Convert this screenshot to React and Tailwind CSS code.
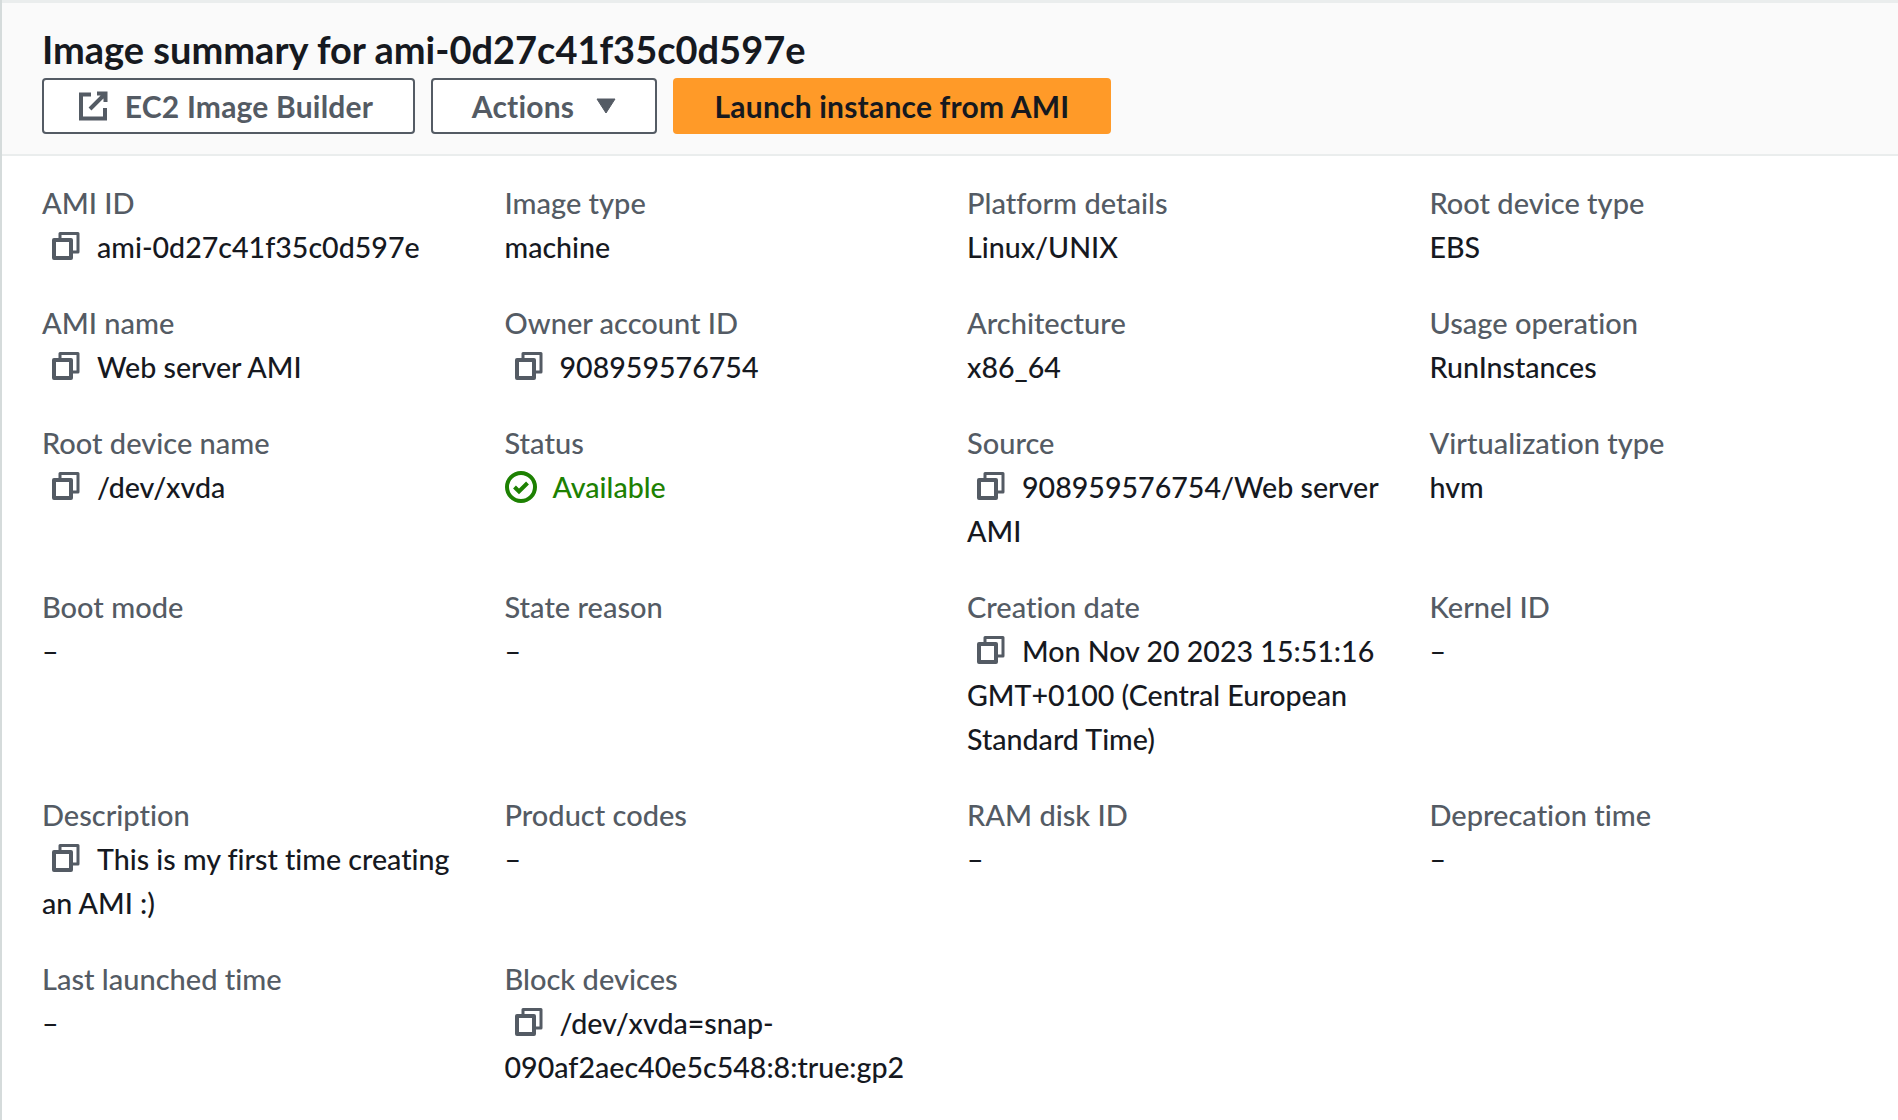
const fields = [
  { label: "AMI ID", value: "ami-0d27c41f35c0d597e", copy: true },
  { label: "Image type", value: "machine" },
  { label: "Platform details", value: "Linux/UNIX" },
  { label: "Root device type", value: "EBS" },
  { label: "AMI name", value: "Web server AMI", copy: true },
  { label: "Owner account ID", value: "908959576754", copy: true },
  { label: "Architecture", value: "x86_64" },
  { label: "Usage operation", value: "RunInstances" },
  { label: "Root device name", value: "/dev/xvda", copy: true },
  { label: "Status", status: "Available" },
  { label: "Source", value: "908959576754/Web server AMI", copy: true },
  { label: "Virtualization type", value: "hvm" },
  { label: "Boot mode", value: "–" },
  { label: "State reason", value: "–" },
  { label: "Creation date", value: "Mon Nov 20 2023 15:51:16 GMT+0100 (Central European Standard Time)", copy: true },
  { label: "Kernel ID", value: "–" },
  { label: "Description", value: "This is my first time creating an AMI :)", copy: true },
  { label: "Product codes", value: "–" },
  { label: "RAM disk ID", value: "–" },
  { label: "Deprecation time", value: "–" },
  { label: "Last launched time", value: "–" },
  { label: "Block devices", value: "/dev/xvda=snap-090af2aec40e5c548:8:true:gp2", copy: true },
];

function CopyIcon() {
  return (
    <svg className="inline-block w-[32px] h-[32px] ml-[8px] mr-[15px] align-[-4px] text-[#545b64]" viewBox="0 0 32 32" fill="none" stroke="currentColor" strokeLinejoin="round">
      <path d="M10 8V3.5h18v18.5h-5" strokeWidth="3" />
      <rect x="4" y="10" width="17" height="18" strokeWidth="4" />
    </svg>
  );
}

function StatusIcon() {
  return (
    <svg className="inline-block w-[32px] h-[32px] mr-[16px] align-[-5px] text-[#1d8102]" viewBox="0 0 32 32" fill="none" stroke="currentColor" strokeWidth="4">
      <circle cx="16" cy="16" r="14" />
      <path d="M9.5 16l4.5 4.5 8.5-8.5" />
    </svg>
  );
}

function Field({ label, value, copy, status }) {
  return (
    <div className="mb-[32px]">
      <div className="text-[#545b64]">{label}</div>
      <div className="text-[#16191f] text-[28.6px] break-words">
        {status ? (
          <span className="text-[#1d8102] font-medium">
            <StatusIcon />
            {status}
          </span>
        ) : (
          <>
            {copy && <CopyIcon />}
            {value}
          </>
        )}
      </div>
    </div>
  );
}

export default function App() {
  return (
    <div className="min-h-[1120px] bg-white border-l-2 border-[#d5dbdb] text-[29px] leading-[44px] font-medium [font-variant-ligatures:none]" style={{ fontFamily: "Lato, sans-serif" }}>
      <div className="bg-[#fafafa] border-t-[3px] border-b-2 border-[#eaeded] h-[156px] pl-[40px] pt-[21px]">
        <h1 className="text-[38px] leading-[50px] font-bold text-[#16191f]">Image summary for ami-0d27c41f35c0d597e</h1>
        <div className="flex gap-[16px] mt-[4px] text-[30px] tracking-[0.2px]">
          <button className="h-[56px] w-[373px] pr-[7px] flex items-center justify-center gap-[16px] bg-white border-2 border-[#545b64] rounded-[4px] font-bold text-[#545b64]">
            <svg className="w-[32px] h-[32px]" viewBox="0 0 32 32" fill="none" stroke="currentColor">
              <path d="M14 4.5H4v24h24V18" strokeWidth="4" />
              <path d="M20 3.5h8.5V12M28 4L13 19" strokeWidth="4" />
            </svg>
            EC2 Image Builder
          </button>
          <button className="h-[56px] w-[226px] flex items-center justify-center gap-[22px] bg-white border-2 border-[#545b64] rounded-[4px] font-bold text-[#545b64]">
            Actions
            <svg className="w-[20px] h-[16px]" viewBox="0 0 20 16" fill="currentColor" stroke="currentColor" strokeWidth="1" strokeLinejoin="round">
              <path d="M1 1h18L10 15z" />
            </svg>
          </button>
          <button className="h-[56px] w-[438px] flex items-center justify-center bg-[#ff9a28] rounded-[4px] font-bold text-[#16191f]">
            Launch instance from AMI
          </button>
        </div>
      </div>
      <div className="grid grid-cols-[430.5px_430.5px_430.5px_430.5px] gap-x-[32px] pl-[40px] pt-[25px]">
        {fields.map((f) => (
          <Field key={f.label} {...f} />
        ))}
      </div>
    </div>
  );
}
